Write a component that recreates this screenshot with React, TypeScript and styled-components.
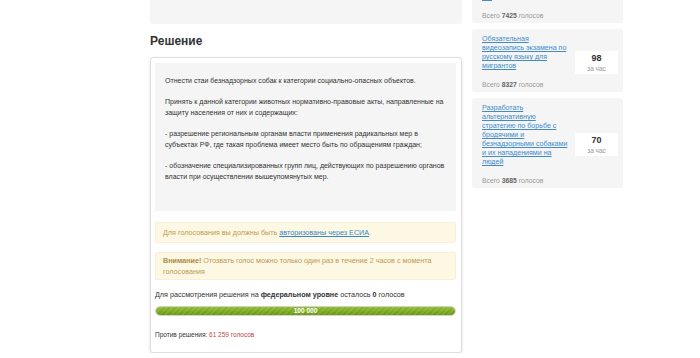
import styled, { createGlobalStyle } from 'styled-components';

const GlobalStyle = createGlobalStyle`
  html, body {
    margin: 0;
    padding: 0;
    background: #fff;
    overflow: hidden;
  }
  body {
    font-family: "Liberation Sans", Arial, sans-serif;
    color: #333;
  }
`;

// page is shown scrolled a bit: the previous block ends at the top edge
const Page = styled.div`
  display: grid;
  grid-template-columns: 312px 151px;
  column-gap: 10px;
  align-items: start;
  padding-left: 150px;
  margin-top: -58px;
`;

const MainColumn = styled.div`
  display: flex;
  flex-direction: column;
`;

const PrevBlock = styled.div`
  height: 82px;
  background: #f5f5f5;
  border-radius: 0 0 3px 3px;
`;

const SectionTitle = styled.h2`
  margin: 10px 0 9px;
  font-size: 12px;
  line-height: 14px;
  font-weight: bold;
  color: #333;
`;

const Card = styled.div`
  background: #fff;
  border: 1px solid #dedede;
  border-radius: 3px;
  box-shadow: 0 1px 3px rgba(0, 0, 0, 0.12);
  padding: 5px 5px 12px 4px;
`;

const TextBox = styled.div`
  background: #f5f5f5;
  padding: 12px 6px 29px 10px;
  font-size: 7px;
  line-height: 11px;
  color: #333;

  p {
    margin: 0 0 10px;
  }
  p:last-child {
    margin-bottom: 0;
  }
`;

const Alert = styled.div<{ $compact?: boolean }>`
  margin-top: ${(p) => (p.$compact ? 9 : 11)}px;
  background: #fcf8e3;
  border: 1px solid #fbeed5;
  border-radius: 2px;
  padding: ${(p) => (p.$compact ? '2px 7px' : '4px 7px')};
  font-size: 7.2px;
  line-height: 11px;
  color: #c09853;

  a {
    color: #3a87c8;
    text-decoration: underline;
  }
  b {
    color: #b08a45;
  }
`;

const VoteInfo = styled.div`
  margin-top: 9px;
  font-size: 7.2px;
  line-height: 11px;
  color: #333;
`;

const Track = styled.div`
  margin-top: 6px;
  border: 1px solid #d2d2d2;
  border-radius: 6px;
  background: #eee;
  overflow: hidden;
`;

const Fill = styled.div`
  height: 8px;
  border-radius: 5px;
  background:
    repeating-linear-gradient(
      -45deg,
      rgba(255, 255, 255, 0.07) 0 2px,
      rgba(0, 0, 0, 0.03) 2px 4px
    ),
    linear-gradient(#93c02e, #6f9915);
  color: #fff;
  text-align: center;
  font-size: 6.5px;
  line-height: 8px;
  font-weight: bold;
`;

const Against = styled.div`
  margin: 14px 0 0;
  font-size: 6.5px;
  line-height: 10px;
  color: #333;

  span {
    color: #b94a48;
  }
`;

const Sidebar = styled.div`
  display: flex;
  flex-direction: column;
  gap: 6px;
`;

const SideCard = styled.div`
  display: flex;
  align-items: center;
  gap: 5px;
  background: #f5f5f5;
  border-radius: 3px;
  padding: 6px 5px 3px 10px;
`;

const SideInfo = styled.div`
  flex: 1;
  min-width: 0;
`;

const SideLink = styled.a`
  display: block;
  font-size: 7.1px;
  line-height: 9px;
  color: #428bca;
  text-decoration: underline;
`;

const Total = styled.div`
  margin-top: 9px;
  font-size: 6.8px;
  line-height: 9px;
  color: #999;

  b {
    color: #666;
  }
`;

const RateBox = styled.div`
  flex: 0 0 43px;
  background: #fff;
  text-align: center;
  padding: 2px 0 1px;
`;

const RateValue = styled.div`
  font-size: 9px;
  line-height: 11px;
  font-weight: bold;
  color: #333;
`;

const RateLabel = styled.div`
  font-size: 6.5px;
  line-height: 9px;
  color: #999;
`;

const popular = [
  {
    title:
      'Запретить продажу энергетических и иных тонизирующих напитков несовершеннолетним лицам на всей территории РФ',
    rate: 112,
    total: '7425',
  },
  {
    title: 'Обязательная видеозапись экзамена по русскому языку для мигрантов',
    rate: 98,
    total: '8327',
  },
  {
    title:
      'Разработать альтернативную стратегию по борьбе с бродячими и безнадзорными собаками и их нападениями на людей',
    rate: 70,
    total: '3685',
  },
];

export default function App() {
  return (
    <>
      <GlobalStyle />
      <Page>
        <MainColumn>
          <PrevBlock />
          <SectionTitle>Решение</SectionTitle>
          <Card>
            <TextBox>
              <p>Отнести стаи безнадзорных собак к категории социально-опасных объектов.</p>
              <p>
                Принять к данной категории животных нормативно-правовые акты, направленные на
                защиту населения от них и содержащих:
              </p>
              <p>
                - разрешение региональным органам власти применения радикальных мер в
                субъектах РФ, где такая проблема имеет место быть по обращениям граждан;
              </p>
              <p>
                - обозначение специализированных групп лиц, действующих по разрешению органов
                власти при осуществлении вышеупомянутых мер.
              </p>
            </TextBox>

            <Alert>
              Для голосования вы должны быть <a href="#">авторизованы через ЕСИА</a>.
            </Alert>
            <Alert $compact>
              <b>Внимание!</b> Отозвать голос можно только один раз в течение 2 часов с момента
              голосования
            </Alert>

            <VoteInfo>
              Для рассмотрения решения на <b>федеральном уровне</b> осталось <b>0</b> голосов
            </VoteInfo>
            <Track>
              <Fill style={{ width: '100%' }}>100 000</Fill>
            </Track>

            <Against>
              Против решения: <span>61 259 голосов</span>
            </Against>
          </Card>
        </MainColumn>

        <Sidebar>
          {popular.map((item) => (
            <SideCard key={item.total}>
              <SideInfo>
                <SideLink href="#">{item.title}</SideLink>
                <Total>
                  Всего <b>{item.total}</b> голосов
                </Total>
              </SideInfo>
              <RateBox>
                <RateValue>{item.rate}</RateValue>
                <RateLabel>за час</RateLabel>
              </RateBox>
            </SideCard>
          ))}
        </Sidebar>
      </Page>
    </>
  );
}
